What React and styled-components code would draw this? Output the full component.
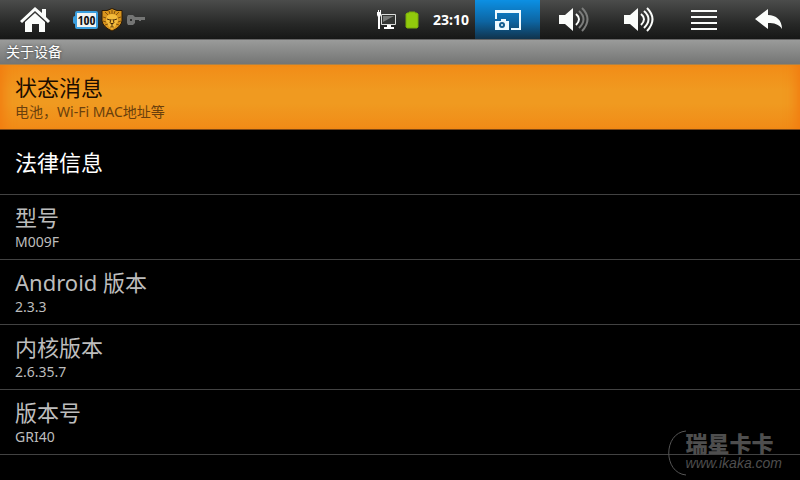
import React from 'react';
import styled, { createGlobalStyle } from 'styled-components';

const GlobalStyle = createGlobalStyle`
  * {
    box-sizing: border-box;
  }
  body {
    margin: 0;
    background: #000;
    color: #bdbdbd;
    font-family: "Noto Sans", "Noto Sans CJK SC", sans-serif;
  }
`;

const Screen = styled.div`
  position: relative;
  min-height: 100vh;
`;

const StatusBar = styled.header`
  display: flex;
  align-items: stretch;
  justify-content: space-between;
  height: 39px;
  background: linear-gradient(#4b4c4b, #282928 60%, #161716);
`;

const Group = styled.div`
  display: flex;
  align-items: center;
`;

const Notices = styled(Group)`
  gap: 3px;
`;

const BarButton = styled.button`
  display: flex;
  align-items: center;
  justify-content: center;
  width: ${({ $wide }) => ($wide ? '70px' : '65px')};
  height: 39px;
  padding: 0;
  border: 0;
  background: ${({ $active }) => ($active ? 'linear-gradient(#0c90e4, #0d65a2 55%, #10334c)' : 'none')};
  cursor: pointer;
`;

const BatteryLevel = styled.span`
  display: flex;
  align-items: center;
  &::before {
    content: "";
    width: 2px;
    height: 8px;
    border-radius: 2px 0 0 2px;
    background: #3a9ede;
  }
`;

const BatteryValue = styled.span`
  width: 23px;
  height: 18px;
  border: 2px solid #3a9ede;
  border-radius: 2px;
  background: #f2f4f2;
  color: #111;
  font: bold 13px/14px "Liberation Sans Narrow", "Open Sans Condensed", "Liberation Sans", sans-serif;
  text-align: center;
`;

const Indicators = styled(Group)`
  gap: 8px;
`;

const Clock = styled.time`
  width: 48px;
  color: #fff;
  font-size: 14px;
  font-weight: bold;
  text-align: center;
`;

const PageTitle = styled.h1`
  height: 26px;
  margin: 0;
  padding: 0 6px;
  border-top: 1px solid #666;
  border-bottom: 1px solid #a9824c;
  background: linear-gradient(#9a9b9a, #747574);
  color: #fff;
  font-size: 14px;
  font-weight: normal;
  line-height: 24px;
  text-shadow: 0 0 3px #333;
`;

const List = styled.ul`
  margin: 0;
  padding: 0;
  list-style: none;
`;

const Row = styled.li`
  display: flex;
  flex-direction: column;
  justify-content: center;
  height: 65px;
  padding: 0 15px;
  border-bottom: 1px solid ${({ $selected }) => ($selected ? '#7c4715' : '#424242')};
  color: ${({ $bright }) => ($bright ? '#fff' : '#bdbdbd')};
  ${({ $selected }) => $selected && `
    background: linear-gradient(#f28c17, #f09a20 40%, #f09a20 60%, #f18b17);
    box-shadow: inset 16px 0 12px -12px #f27c10, inset -16px 0 12px -12px #f27c10;
    color: #1c0d00;
  `}
`;

const Label = styled.span`
  font-size: 22px;
  line-height: 28px;
`;

const Detail = styled.span`
  padding-top: 2px;
  color: ${({ $selected }) => ($selected ? '#6a3f0c' : '#bdbdbd')};
  font-size: 14px;
  line-height: 18px;
`;

const Watermark = styled.div`
  position: absolute;
  top: 430px;
  right: 14px;
  padding: 4px 4px 0 18px;
  color: #4e4e4e;
  svg {
    position: absolute;
    top: 0;
    left: 0;
  }
`;

const Brand = styled.div`
  font-family: "Noto Sans CJK SC", sans-serif;
  font-size: 22px;
  font-weight: 900;
  line-height: 16px;
`;

const Site = styled.div`
  padding-top: 4px;
  font: italic 14px/18px "Liberation Sans", sans-serif;
`;

const HomeIcon = () => (
  <svg width="32" height="26" viewBox="0 0 32 26" fill="#fbfdfb">
    <path d="M1 14 16 0l7 6V2h4v8l4 4-2 2L16 4 3 16z" />
    <path d="M6 15 16 6l10 9v10h-6v-8h-7v8H6z" />
  </svg>
);

const LionIcon = () => (
  <svg width="22" height="24" viewBox="0 0 22 24">
    <path d="M1 2.500q5 1 10-2 5 3 10 2V13q-1 6-10 10Q2 19 1 13z" fill="#d9951d" stroke="#2c1b06" />
    <path d="M6 8q5-4 10 0l1 5-3 6-3 2-3-2-3-6z" fill="#f3bb3c" />
    <path d="m4 4 3 3M8 3l1 3M11 2v4M14 3l-1 3M18 4l-3 3M2 9l3 1M20 9l-3 1M2 13l3 1M20 13l-3 1M4 17l3-1M18 17l-3-1M9 19h4" fill="none" stroke="#6d420a" strokeWidth=".8" />
    <path d="m6 11 3 1M16 11l-3 1M10 11l-1 4M12 11l1 4M11 17v2" fill="none" stroke="#4d2e08" />
    <path d="M9 15h4l-2 2z" fill="#3a2206" />
  </svg>
);

const KeyIcon = () => (
  <svg width="21" height="12" viewBox="0 0 21 12" fill="#747574">
    <path d="M2 1h5l2 2h10v3h-4v1h-2V6H9v3l-2 2H2L1 9V3zM4 5v2h2V5z" fillRule="evenodd" />
  </svg>
);

const NetworkIcon = () => (
  <svg width="20" height="20" viewBox="0 0 20 20">
    <path d="M4.500 4.500h14v10h-14z" fill="#333533" stroke="#dcdedc" />
    <path d="M6 6h11L6 12z" fill="#777977" />
    <path d="M10 15h4v2h3v2H7v-2h3zM0 2h1V0h1v2h1V0h1v5l-1 2v12H1V7L0 5z" fill="#fff" />
  </svg>
);

const BatteryIcon = () => (
  <svg width="14" height="18" viewBox="0 0 14 18">
    <path d="M4 1h6v1h2l1 1v13l-1 1H2l-1-1V3l1-1h2z" fill="#91ca0c" stroke="#78ac0b" />
  </svg>
);

const ScreenshotIcon = () => (
  <svg width="28" height="22" viewBox="0 0 28 22">
    <path d="M2 10V2h24v18h-9" fill="none" stroke="#eefaff" strokeWidth="2" />
    <path d="M1 1h26v3H1zM1 12h6v-2h5v2h3v9H1z" fill="#eefaff" />
    <circle cx="8" cy="16" r="3" fill="#155f91" />
    <circle cx="8" cy="16" r="1" fill="#eefaff" />
  </svg>
);

const VolumeIcon = ({ loud }) => (
  <svg width="32" height="26" viewBox="-1 0 32 26" fill="none" strokeWidth="2">
    <path d="M1 8h6l8-7v23l-8-7H1z" fill="#fbfdfb" />
    <path d="M18 7q6 5 0 11" stroke="#fbfdfb" />
    <path d="M21 4q9 8 0 17M24 1q11 11 0 23" stroke={loud ? '#fbfdfb' : '#7c7d7c'} />
  </svg>
);

const MenuIcon = () => (
  <svg width="28" height="22" viewBox="0 0 28 22" fill="#fbfdfb">
    <path d="M2 1h26v2H2zM2 7h26v2H2zM2 13h26v2H2zM2 19h26v2H2z" />
  </svg>
);

const BackIcon = () => (
  <svg width="30" height="22" viewBox="0 0 30 22" fill="#fbfdfb">
    <path d="M2 10 15 0v6c8 0 14 5 14 14-3-5-8-6-14-6v6z" />
  </svg>
);

const items = [
  { label: '状态消息', detail: '电池，Wi-Fi MAC地址等', selected: true },
  { label: '法律信息', bright: true },
  { label: '型号', detail: 'M009F' },
  { label: 'Android 版本', detail: '2.3.3' },
  { label: '内核版本', detail: '2.6.35.7' },
  { label: '版本号', detail: 'GRI40' },
];

function App() {
  return (
    <Screen lang="zh-CN">
      <GlobalStyle />
      <StatusBar>
        <Notices>
          <BarButton $wide aria-label="主页"><HomeIcon /></BarButton>
          <BatteryLevel><BatteryValue>100</BatteryValue></BatteryLevel>
          <LionIcon />
          <KeyIcon />
        </Notices>
        <Group>
          <Indicators>
            <NetworkIcon />
            <BatteryIcon />
            <Clock>23:10</Clock>
          </Indicators>
          <BarButton $active aria-label="截屏"><ScreenshotIcon /></BarButton>
          <BarButton aria-label="减小音量"><VolumeIcon /></BarButton>
          <BarButton aria-label="增大音量"><VolumeIcon loud /></BarButton>
          <BarButton aria-label="菜单"><MenuIcon /></BarButton>
          <BarButton aria-label="返回"><BackIcon /></BarButton>
        </Group>
      </StatusBar>
      <PageTitle>关于设备</PageTitle>
      <List>
        {items.map(({ label, detail, selected, bright }) => (
          <Row key={label} $selected={selected} $bright={bright}>
            <Label>{label}</Label>
            {detail && <Detail $selected={selected}>{detail}</Detail>}
          </Row>
        ))}
      </List>
      <Watermark>
        <svg width="20" height="46" viewBox="0 0 20 46" fill="none" stroke="#555">
          <path d="M18 1C-5 3-5 43 18 45" />
        </svg>
        <Brand>瑞星卡卡</Brand>
        <Site>www.ikaka.com</Site>
      </Watermark>
    </Screen>
  );
}

export default App;
